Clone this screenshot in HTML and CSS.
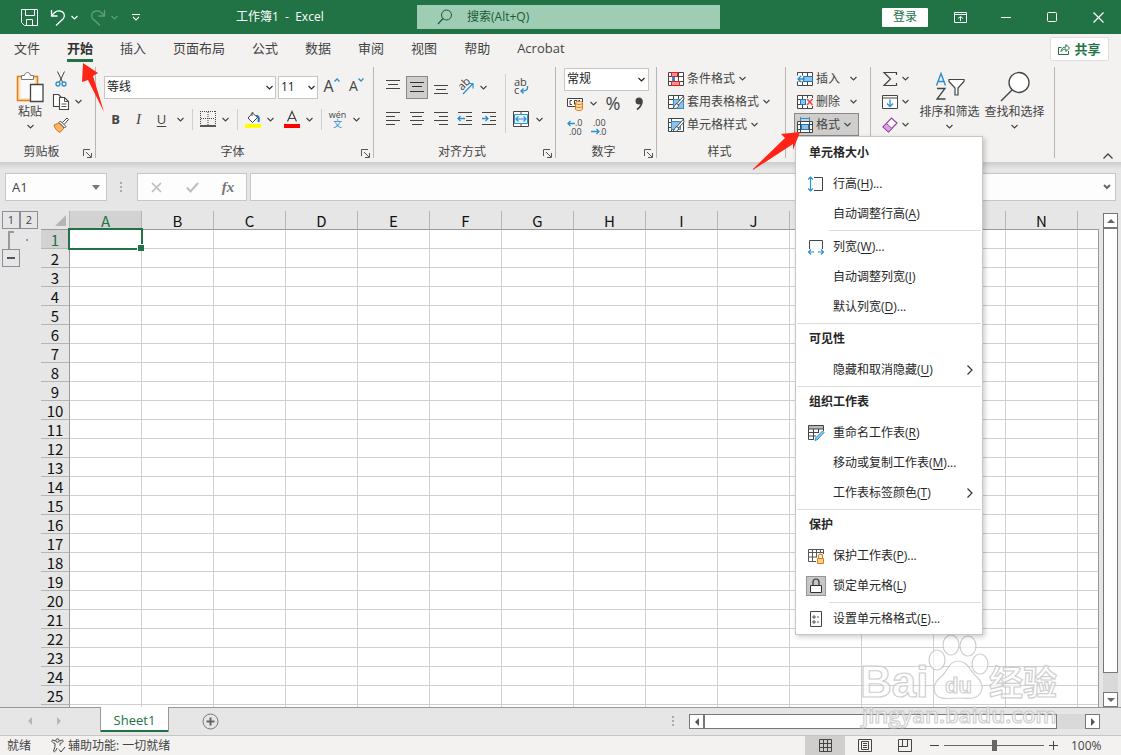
FILE: index.html
```html
<!DOCTYPE html>
<html lang="zh-CN">
<head>
    <meta charset="UTF-8">
    <meta name="viewport" content="width=device-width, initial-scale=1.0">
    <title>工作簿1 - Excel</title>
    <link rel="stylesheet" href="styles.css">
</head>
<body>
    <!-- 图标 -->
    <svg class="sprite" aria-hidden="true">
        <symbol id="chev" viewBox="0 0 7 5"><path d="M.5 1l3 3 3-3" fill="none" stroke="currentColor" stroke-width="1.1"/></symbol>
        <symbol id="launch" viewBox="0 0 9 9"><path d="M.5 7V.5H7M3 3l5 5M8.500 4v4.500H4" fill="none" stroke="#555"/></symbol>
        <symbol id="grid-base" viewBox="0 0 16 16"><path d="M.5 1.500h15v13H.5zM.5 5.500h15M.5 10.500h15M5.500 1.500v13M10.500 1.500v13" fill="#fff" stroke="#444"/></symbol>
    </svg>

    <header class="titlebar">
        <div class="quick">
            <button class="q-save" aria-label="保存"><svg width="17" height="17" viewBox="0 0 17 17"><path d="M.5.5h16v16h-13l-3-3zM4.500.5v6h9v-6M5.500 16.500v-6h6v6" fill="none" stroke="#fff"/></svg></button>
            <button class="q-undo" aria-label="撤消"><svg width="16" height="17" viewBox="0 0 16 17"><path d="M1.500 1v6h6M1.500 7C4 3.500 7 1.500 10 2c4 .5 5.500 4.500 3.500 7.500L6 16.500" fill="none" stroke="#fff" stroke-width="1.3"/></svg></button>
            <button class="q-drop" aria-label="撤消列表"><svg width="7" height="5"><use href="#chev"/></svg></button>
            <button class="q-undo dim" aria-label="恢复"><svg width="16" height="17" viewBox="0 0 16 17"><path d="M14.500 1v6h-6M14.500 7C12 3.500 9 1.500 6 2 2 2.500.5 6.500 2.500 9.500l7.500 7" fill="none" stroke="#fff" stroke-width="1.3"/></svg></button>
            <button class="q-drop dim" aria-label="恢复列表"><svg width="7" height="5"><use href="#chev"/></svg></button>
            <button class="q-more" aria-label="自定义快速访问工具栏"><svg width="8" height="7" viewBox="0 0 8 7"><path d="M0 .5h8M1 3l3 3 3-3" fill="none" stroke="#fff" stroke-width="1.1"/></svg></button>
        </div>
        <div class="doc-title">工作簿1&nbsp; -&nbsp; Excel</div>
        <label class="search">
            <svg width="16" height="16" viewBox="0 0 16 16"><circle cx="9.500" cy="6" r="5" fill="none" stroke="#185c37"/><path d="M6 9.500L1 15" stroke="#185c37" stroke-width="1.2"/></svg>
            <input type="text" aria-label="搜索" placeholder="搜索(Alt+Q)">
        </label>
        <div class="window-tools">
            <button class="login">登录</button>
            <button class="win" aria-label="功能区显示选项"><svg width="13" height="11" viewBox="0 0 13 11"><path d="M.5.5h12v10H.5zM.5 2.500h12M6.500 9V4.500M4 6.500l2.500-2 2.500 2" fill="none" stroke="#fff"/></svg></button>
            <button class="win" aria-label="最小化"><svg width="10" height="11" viewBox="0 0 10 11"><path d="M0 5.500h10" stroke="#fff"/></svg></button>
            <button class="win" aria-label="最大化"><svg width="11" height="11" viewBox="0 0 11 11"><rect x=".5" y=".5" width="9" height="9" rx="1" fill="none" stroke="#fff"/></svg></button>
            <button class="win" aria-label="关闭"><svg width="11" height="11" viewBox="0 0 11 11"><path d="M.5.5l10 10M10.500.5l-10 10" stroke="#fff" stroke-width="1.2"/></svg></button>
        </div>
    </header>

    <nav class="tabs">
        <a href="#">文件</a>
        <a href="#" class="active">开始
            <svg class="pointer pointer-tab" width="24" height="50" viewBox="0 0 24 50"><path d="M3 0l15 10-5 3 11 36L8 17l-6 2z" fill="#ff2416"/></svg>
        </a>
        <a href="#">插入</a>
        <a href="#">页面布局</a>
        <a href="#">公式</a>
        <a href="#">数据</a>
        <a href="#">审阅</a>
        <a href="#">视图</a>
        <a href="#">帮助</a>
        <a href="#">Acrobat</a>
        <button class="share"><svg width="12" height="12" viewBox="0 0 12 12"><path d="M3.500 4.500h-3v7h10V8M3 8.500c.5-3 2-4.500 5-4.500V1.500L11.500 5 8 8.500V6C6 6 4.500 6.500 3 8.500z" fill="none" stroke="#217346"/></svg>共享</button>
    </nav>

    <section class="ribbon">
        <div class="group clipboard">
            <div class="body">
                <button class="big">
                    <svg width="28" height="32" viewBox="0 0 28 32"><path d="M1.500 5.500h20v24h-20z" fill="#fbe3b5" stroke="#e07c17" stroke-width="1.500"/><path d="M4.500 8h14v19h-14z" fill="#fafafa"/><path d="M5.500 8.500v-4h3c.5-4 5.500-4 6 0h3v4z" fill="#fff" stroke="#777"/><path d="M14.500 13.500h12.500v17H14.500z" fill="#fff" stroke="#444" stroke-width="1.300"/></svg>
                    <span>粘贴</span>
                    <svg width="7" height="5"><use href="#chev"/></svg>
                </button>
                <div class="stack">
                    <button class="line" aria-label="剪切"><svg width="16" height="16" viewBox="0 0 16 16"><path d="M4.500.5l5 10.500M11.500.5l-5 10.500" stroke="#444" fill="none"/><circle cx="5" cy="13" r="2" fill="none" stroke="#2b8fd0" stroke-width="1.300"/><circle cx="11" cy="13" r="2" fill="none" stroke="#2b8fd0" stroke-width="1.300"/></svg></button>
                    <button class="line" aria-label="复制"><svg width="17" height="16" viewBox="0 0 17 16"><path d="M6 12.500H.5V.5h5l3 3M6.500 3.500h5l4 4v8h-9z" fill="#fff" stroke="#444" stroke-width="1.100"/><path d="M11.500 3.500v4h4M8.500 10h5M8.500 12.500h5" fill="none" stroke="#444" stroke-width=".9"/></svg><svg class="copy-arrow" width="7" height="5"><use href="#chev"/></svg></button>
                    <button class="line" aria-label="格式刷"><svg width="16" height="16" viewBox="0 0 16 16"><path d="M1 8l5-2 5 5-4 4.500C4 14 2 12 1 8z" fill="#f8b56a" stroke="#d9731a"/><path d="M6 5.500L7.500 4l5.500 5.500-1.500 1.500zM9.500 5.500L14 1l1.500 1.500L11.500 7" fill="#fff" stroke="#444"/></svg></button>
                </div>
            </div>
            <footer><span>剪贴板</span><button aria-label="剪贴板设置"><svg width="9" height="9"><use href="#launch"/></svg></button></footer>
        </div>

        <div class="group font">
            <div class="body two-rows">
                <div class="row">
                    <label class="combo font-name"><select aria-label="字体"><option>等线</option></select><svg width="7" height="5"><use href="#chev"/></svg></label>
                    <label class="combo font-size"><select aria-label="字号"><option>11</option></select><svg width="7" height="5"><use href="#chev"/></svg></label>
                    <button class="tool grow" aria-label="增大字号"><span>A</span><svg width="6" height="4" viewBox="0 0 6 4"><path d="M.5 3.500L3 1l2.500 2.500" fill="none" stroke="#2b8fd0" stroke-width="1.300"/></svg></button>
                    <button class="tool shrink" aria-label="减小字号"><span>A</span><svg width="6" height="4" viewBox="0 0 6 4"><path d="M.5.5L3 3 5.500.5" fill="none" stroke="#2b8fd0" stroke-width="1.300"/></svg></button>
                </div>
                <div class="row">
                    <button class="tool letter"><b>B</b></button>
                    <button class="tool letter"><i>I</i></button>
                    <button class="tool letter"><u>U</u></button>
                    <button class="arrow" aria-label="下划线样式"><svg width="7" height="5"><use href="#chev"/></svg></button>
                    <i class="split"></i>
                    <button class="tool icon" aria-label="边框"><svg width="16" height="16" viewBox="0 0 16 16"><path d="M.5 0v14M15.500 0v14M0 .5h16M8 1v13M1 7.500h14" fill="none" stroke="#444" stroke-dasharray="1 1"/><path d="M0 15h16" stroke="#222" stroke-width="1.500"/></svg></button>
                    <button class="arrow" aria-label="边框样式"><svg width="7" height="5"><use href="#chev"/></svg></button>
                    <i class="split"></i>
                    <button class="tool icon" aria-label="填充颜色"><svg width="16" height="17" viewBox="0 0 16 17"><path d="M8 1.500L3 7l4.500 4.500 5-5L7 1.500V5" fill="#fff" stroke="#444"/><path d="M11 5c3-.5 3 2.500 2.500 6" fill="none" stroke="#1f6fb4" stroke-width="2"/><path d="M0 13h16v4H0z" fill="#ff0"/></svg></button>
                    <button class="arrow" aria-label="填充颜色列表"><svg width="7" height="5"><use href="#chev"/></svg></button>
                    <button class="tool icon color" aria-label="字体颜色"><svg width="16" height="17" viewBox="0 0 16 17"><path d="M3.500 10.500L8 .5l4.500 10M5 7.500h6" fill="none" stroke="#444" stroke-width="1.200"/><path d="M0 13h16v4H0z" fill="#f00"/></svg></button>
                    <button class="arrow" aria-label="字体颜色列表"><svg width="7" height="5"><use href="#chev"/></svg></button>
                    <i class="split"></i>
                    <button class="tool pinyin"><span>wén</span><em>文</em></button>
                    <button class="arrow" aria-label="拼音设置"><svg width="7" height="5"><use href="#chev"/></svg></button>
                </div>
            </div>
            <footer><span>字体</span><button aria-label="字体设置"><svg width="9" height="9"><use href="#launch"/></svg></button></footer>
        </div>

        <div class="group align">
            <div class="body">
                <div class="two-rows">
                    <div class="row">
                        <button class="tool" aria-label="顶端对齐"><svg width="14" height="14" viewBox="0 0 14 14"><path d="M0 .5h14M2 4.500h10M0 8.500h14" stroke="#444"/></svg></button>
                        <button class="tool on" aria-label="垂直居中"><svg width="14" height="14" viewBox="0 0 14 14"><path d="M0 2.500h14M2 6.500h10M0 11.500h14" stroke="#333"/></svg></button>
                        <button class="tool" aria-label="底端对齐"><svg width="14" height="14" viewBox="0 0 14 14"><path d="M0 5.500h14M2 9.500h10M0 13.500h14" stroke="#444"/></svg></button>
                        <button class="tool" aria-label="方向"><svg width="17" height="16" viewBox="0 0 17 16"><text x="0" y="0" font-size="11" transform="translate(5 12) rotate(-45)" fill="#444">ab</text><path d="M6 15L15.500 5M11 4.500h5v5" fill="none" stroke="#2b8fd0" stroke-width="1.200"/></svg></button>
                        <button class="arrow" aria-label="方向列表"><svg width="7" height="5"><use href="#chev"/></svg></button>
                    </div>
                    <div class="row">
                        <button class="tool" aria-label="左对齐"><svg width="14" height="14" viewBox="0 0 14 14"><path d="M0 .5h14M0 4.500h9M0 8.500h14M0 12.500h9" stroke="#444"/></svg></button>
                        <button class="tool" aria-label="居中"><svg width="14" height="14" viewBox="0 0 14 14"><path d="M0 .5h14M2 4.500h10M0 8.500h14M2 12.500h10" stroke="#444"/></svg></button>
                        <button class="tool" aria-label="右对齐"><svg width="14" height="14" viewBox="0 0 14 14"><path d="M0 .5h14M5 4.500h9M0 8.500h14M5 12.500h9" stroke="#444"/></svg></button>
                        <button class="tool" aria-label="减少缩进量"><svg width="14" height="14" viewBox="0 0 14 14"><path d="M0 .5h14M8 4.500h6M8 8.500h6M0 12.500h14" stroke="#444"/><path d="M7 6.500H0M2.500 4L0 6.500 2.500 9" fill="none" stroke="#2b8fd0" stroke-width="1.300"/></svg></button>
                        <button class="tool" aria-label="增加缩进量"><svg width="14" height="14" viewBox="0 0 14 14"><path d="M0 .5h14M8 4.500h6M8 8.500h6M0 12.500h14" stroke="#444"/><path d="M0 6.500h6M3.500 4L6 6.500 3.500 9" fill="none" stroke="#2b8fd0" stroke-width="1.300"/></svg></button>
                    </div>
                </div>
                <i class="split tall"></i>
                <div class="two-rows">
                    <div class="row">
                        <button class="tool" aria-label="自动换行"><svg width="16" height="18" viewBox="0 0 16 18"><text x="1" y="8" font-size="11" fill="#444">ab</text><text x="1" y="16" font-size="11" fill="#444">c</text><path d="M14.500 8v2c0 2.500-2 3-6.500 3M10.500 10.500L8 13l2.500 2.500" fill="none" stroke="#2b8fd0" stroke-width="1.400"/></svg></button>
                    </div>
                    <div class="row">
                        <button class="tool" aria-label="合并后居中"><svg width="16" height="16" viewBox="0 0 16 16"><path d="M.5.5h15v15H.5zM8 .5v3M8 12.500v3" fill="#fff" stroke="#444"/><path d="M1.500 3.500h13v9h-13z" fill="#e8f3fb" stroke="#2b8fd0"/><path d="M3 8h10M5.500 5.500L3 8l2.500 2.500M10.500 5.500L13 8l-2.500 2.500" fill="none" stroke="#2b8fd0" stroke-width="1.200"/></svg></button>
                        <button class="arrow" aria-label="合并列表"><svg width="7" height="5"><use href="#chev"/></svg></button>
                    </div>
                </div>
            </div>
            <footer><span>对齐方式</span><button aria-label="对齐设置"><svg width="9" height="9"><use href="#launch"/></svg></button></footer>
        </div>

        <div class="group number">
            <div class="body">
                <div class="row">
                    <label class="combo num-format"><select aria-label="数字格式"><option>常规</option></select><svg width="7" height="5"><use href="#chev"/></svg></label>
                </div>
                <div class="row">
                    <button class="tool" aria-label="会计数字格式"><svg width="17" height="15" viewBox="0 0 17 15"><path d="M8 10.500H.5v-8h15V6" fill="#fff" stroke="#444"/><path d="M5 4.500H3v4h2M10 8V4.500H7.500v4M13 4.500h-1.500" fill="none" stroke="#444"/><path d="M8.500 7v6c0 2 7 2 7 0V7c0-2-7-2-7 0zM8.500 7c0 2 7 2 7 0M8.500 10c0 2 7 2 7 0" fill="#ffe0b5" stroke="#e07c17"/></svg></button>
                    <button class="arrow" aria-label="会计格式列表"><svg width="7" height="5"><use href="#chev"/></svg></button>
                    <button class="tool percent">%</button>
                    <button class="tool" aria-label="千位分隔样式"><svg width="9" height="13" viewBox="0 0 9 13"><circle cx="4" cy="4" r="3.500" fill="#444"/><path d="M6.500 3c1 4-1 7-4.500 9.500" fill="none" stroke="#444" stroke-width="1.800"/></svg></button>
                </div>
                <div class="row">
                    <button class="tool" aria-label="增加小数位数"><svg width="17" height="17" viewBox="0 0 17 17"><text x="8" y="7" font-size="9" fill="#444">.0</text><text x="2" y="16" font-size="9" fill="#444">.00</text><path d="M8 4.500H1M3.500 2L1 4.500 3.500 7" fill="none" stroke="#2b8fd0" stroke-width="1.300"/></svg></button>
                    <button class="tool" aria-label="减少小数位数"><svg width="17" height="17" viewBox="0 0 17 17"><text x="2" y="7" font-size="9" fill="#444">.00</text><text x="8" y="16" font-size="9" fill="#444">.0</text><path d="M0 12.500h8M5.500 10L8 12.500 5.500 15" fill="none" stroke="#2b8fd0" stroke-width="1.300"/></svg></button>
                </div>
            </div>
            <footer><span>数字</span><button aria-label="数字设置"><svg width="9" height="9"><use href="#launch"/></svg></button></footer>
        </div>

        <div class="group styles">
            <div class="body stack">
                <button class="line"><svg width="16" height="16" viewBox="0 0 16 16"><use href="#grid-base"/><path d="M3.500 1.500h6v4h-6zM3.500 10.500h8v4h-8z" fill="#ff8f8f" stroke="#e02020"/><path d="M4 6h3v4H4z" fill="#2b8fd0"/></svg>条件格式<svg class="a" width="7" height="5"><use href="#chev"/></svg></button>
                <button class="line"><svg width="16" height="16" viewBox="0 0 16 16"><use href="#grid-base"/><path d="M5.500 5.500h10v9h-10z" fill="#8cc3ec" stroke="#2b8fd0"/><path d="M15.500 2L9 9.500l1.500 1.500L16 5zM9 9.500c-2 0-2 3-4 4.500 3 1 5.500 0 5.500-3z" fill="#fff" stroke="#444" stroke-width=".9"/></svg>套用表格格式<svg class="a" width="7" height="5"><use href="#chev"/></svg></button>
                <button class="line"><svg width="16" height="16" viewBox="0 0 16 16"><path d="M.5 1.500h15v13H.5zM.5 5.500h3M.5 10.500h3M3.500 1.500v13" fill="#fff" stroke="#444"/><path d="M3.500 4.500h9v8h-9z" fill="#8cc3ec" stroke="#2b8fd0"/><path d="M15.500 2L9 9.500l1.500 1.500L16 5zM9 9.500c-2 0-2 3-4 4.500 3 1 5.500 0 5.500-3z" fill="#fff" stroke="#444" stroke-width=".9"/></svg>单元格样式<svg class="a" width="7" height="5"><use href="#chev"/></svg></button>
            </div>
            <footer><span>样式</span></footer>
        </div>

        <div class="group cells">
            <div class="body stack">
                <button class="line"><svg width="16" height="16" viewBox="0 0 16 16"><use href="#grid-base"/><path d="M0 4.500h7v6H0z" fill="#f3f2f1"/><path d="M6.500 5.500h9v5h-9z" fill="#8cc3ec" stroke="#1f77c0"/><path d="M8 8H1M4 5L1 8l3 3" fill="none" stroke="#2b8fd0" stroke-width="1.300"/></svg>插入<svg class="a wide" width="7" height="5"><use href="#chev"/></svg></button>
                <button class="line"><svg width="16" height="16" viewBox="0 0 16 16"><use href="#grid-base"/><path d="M9 4h7v8H9z" fill="#f3f2f1"/><path d="M3.500 5.500h5v5h-5z" fill="#8cc3ec" stroke="#1f77c0"/><path d="M10 5l5.500 6M15.500 5L10 11" stroke="#e8473f" stroke-width="1.500"/></svg>删除<svg class="a wide" width="7" height="5"><use href="#chev"/></svg></button>
                <div class="format">
                    <button class="line on"><svg width="16" height="16" viewBox="0 0 16 16"><path d="M.5 4.500h15v11H.5zM.5 7.500h15M.5 12.500h15M3.500 4.500v11M12.500 4.500v11" fill="#fff" stroke="#444"/><path d="M4.500 7.500h7v5h-7z" fill="#8cc3ec" stroke="#1f77c0"/><path d="M3.500 0v4M12.500 0v4M3.500 1.500h9" stroke="#2b8fd0"/></svg>格式<svg class="a" width="7" height="5"><use href="#chev"/></svg></button>
                    <div class="menu">
                        <h3>单元格大小</h3>
                        <button><svg width="16" height="16" viewBox="0 0 16 16"><path d="M6 1.500h8.500v13H6" fill="#fafafa" stroke="#444"/><path d="M2.500 1v14M0 3.500L2.500 1 5 3.500M0 12.500L2.500 15 5 12.500" fill="none" stroke="#2b8fd0" stroke-width="1.200"/></svg><span>行高(<u>H</u>)...</span></button>
                        <button><span>自动调整行高(<u>A</u>)</span></button>
                        <hr class="inset">
                        <button><svg width="16" height="16" viewBox="0 0 16 16"><path d="M1.500 10V1.500h13V10" fill="#fafafa" stroke="#444"/><path d="M0 13h6M10 13h6M3 10.500L.5 13 3 15.500M13 10.500l2.500 2.500-2.500 2.500" fill="none" stroke="#2b8fd0" stroke-width="1.200"/></svg><span>列宽(<u>W</u>)...</span></button>
                        <button><span>自动调整列宽(<u>I</u>)</span></button>
                        <button><span>默认列宽(<u>D</u>)...</span></button>
                        <hr>
                        <h3>可见性</h3>
                        <button><span>隐藏和取消隐藏(<u>U</u>)</span><svg class="sub" width="6" height="10" viewBox="0 0 6 10"><path d="M.5.5L5 5 .5 9.500" fill="none" stroke="#333" stroke-width="1.200"/></svg></button>
                        <hr>
                        <h3>组织工作表</h3>
                        <button><svg width="16" height="16" viewBox="0 0 16 16"><path d="M6 14.500H.5V.5h15V6M.5 7.500h10M.5 11H8M5.500 4v10.500M10.500 4v4" fill="none" stroke="#444"/><path d="M1 1h14v3H1z" fill="#bbb"/><path d="M.5 4h15" stroke="#444"/><path d="M14.500 6l1.500 1.500-6.500 7-2.500 1 1-3z" fill="#8cc3ec" stroke="#2b8fd0"/></svg><span>重命名工作表(<u>R</u>)</span></button>
                        <button><span>移动或复制工作表(<u>M</u>)...</span></button>
                        <button><span>工作表标签颜色(<u>T</u>)</span><svg class="sub" width="6" height="10" viewBox="0 0 6 10"><path d="M.5.5L5 5 .5 9.500" fill="none" stroke="#333" stroke-width="1.200"/></svg></button>
                        <hr>
                        <h3>保护</h3>
                        <button><svg width="16" height="16" viewBox="0 0 16 16"><path d="M8 13.500H.5v-12h15V6M.5 4.500h15M.5 9H9M4.500 1.500v12M8.500 1.500V9M12.500 1.500V5" fill="none" stroke="#555"/><path d="M10.500 10V8c0-2.500 4-2.500 4 0v2" fill="none" stroke="#e07c17" stroke-width="1.200"/><path d="M9.500 10.500h6v5h-6z" fill="#ffd28a" stroke="#e07c17"/></svg><span>保护工作表(<u>P</u>)...</span></button>
                        <button><svg class="pressed" width="20" height="20" viewBox="0 0 20 20"><path d="M7 9V6c0-4 6-4 6 0v3" fill="none" stroke="#333" stroke-width="1.200"/><path d="M4.500 9.500h11v7h-11z" fill="#fff" stroke="#333"/></svg><span>锁定单元格(<u>L</u>)</span></button>
                        <hr class="inset">
                        <button><svg width="12" height="16" viewBox="0 0 12 16"><path d="M.5.5h11v15H.5z" fill="#fff" stroke="#444"/><path d="M3 5h2v2H3zM3 10h2v2H3z" fill="none" stroke="#555"/><path d="M7 6h2M7 11h2" stroke="#555"/></svg><span>设置单元格格式(<u>E</u>)...</span></button>
                    </div>
                    <svg class="pointer pointer-format" width="49" height="40" viewBox="0 0 49 40"><path d="M47 1L28 3l4 4L0 38v1l40-26v6z" fill="#ff2416"/></svg>
                </div>
            </div>
        </div>

        <div class="group editing">
            <div class="body">
                <div class="stack">
                    <button class="line" aria-label="自动求和"><svg width="16" height="16" viewBox="0 0 16 16"><path d="M14.500 4V1.500H2L8.500 8 2 14.500h12.500V12" fill="none" stroke="#444" stroke-width="1.200"/></svg><svg class="a" width="7" height="5"><use href="#chev"/></svg></button>
                    <button class="line" aria-label="填充"><svg width="16" height="16" viewBox="0 0 16 16"><path d="M.5 1.500h15v13H.5zM.5 4h15" fill="#fff" stroke="#444"/><path d="M8 5.500V12M5 9.500L8 12.500l3-3" fill="none" stroke="#2b8fd0" stroke-width="1.300"/></svg><svg class="a" width="7" height="5"><use href="#chev"/></svg></button>
                    <button class="line" aria-label="清除"><svg width="16" height="16" viewBox="0 0 16 16"><path d="M1 10l8.500-9L15 6l-8.500 9z" fill="#fff" stroke="#9b3fa5" stroke-width="1.200"/><path d="M1 10l3.500-3.500L10 11.500 6.500 15z" fill="#d9a3df" stroke="#9b3fa5"/></svg><svg class="a" width="7" height="5"><use href="#chev"/></svg></button>
                </div>
                <button class="big">
                    <svg width="30" height="32" viewBox="0 0 30 32"><path d="M1.500 14.500l4.500-12 4.500 12M3 10.500h6" fill="none" stroke="#2b8fd0" stroke-width="1.400"/><path d="M2 17.500h8L2 28h8.500" fill="none" stroke="#444" stroke-width="1.300"/><path d="M14 8.500h15v2l-6 6.500v7h-3v-7l-6-6.500z" fill="#fff" stroke="#444" stroke-width="1.200"/></svg>
                    <span>排序和筛选</span>
                    <svg width="7" height="5"><use href="#chev"/></svg>
                </button>
                <button class="big">
                    <svg width="30" height="32" viewBox="0 0 30 32"><circle cx="19" cy="11.500" r="10" fill="#fff" stroke="#444" stroke-width="1.300"/><path d="M12 19L1 30" stroke="#444" stroke-width="1.400"/></svg>
                    <span>查找和选择</span>
                    <svg width="7" height="5"><use href="#chev"/></svg>
                </button>
            </div>
        </div>
        <button class="collapse" aria-label="折叠功能区"><svg width="10" height="6" viewBox="0 0 10 6"><path d="M.5 5.500L5 1l4.500 4.500" fill="none" stroke="#444" stroke-width="1.300"/></svg></button>
    </section>

    <section class="formula-bar">
        <label class="name-box"><input type="text" value="A1" aria-label="名称框"><svg width="8" height="5" viewBox="0 0 8 5"><path d="M0 0h8L4 5z" fill="#777"/></svg></label>
        <i class="dots"></i>
        <div class="fx">
            <button aria-label="取消"><svg width="11" height="11" viewBox="0 0 11 11"><path d="M1 1l9 9M10 1l-9 9" stroke="#bdbdbd" stroke-width="1.700"/></svg></button>
            <button aria-label="输入"><svg width="13" height="11" viewBox="0 0 13 11"><path d="M1 5.500L4.500 9.500 12 1" fill="none" stroke="#bdbdbd" stroke-width="2"/></svg></button>
            <button class="fn"><i>fx</i></button>
        </div>
        <label class="formula"><input type="text" aria-label="编辑栏"><svg width="8" height="6" viewBox="0 0 8 6"><path d="M1 1l3 3 3-3" fill="none" stroke="#666" stroke-width="2"/></svg></label>
    </section>

    <main class="workspace">
        <aside class="outline">
            <div class="levels"><button>1</button><button>2</button></div>
            <div class="bracket"><i></i><b></b></div>
            <button class="fold" aria-label="折叠"></button>
        </aside>
        <div class="sheet"><table id="grid"></table></div>
        <div class="vscroll">
            <button aria-label="向上滚动"><svg width="8" height="4" viewBox="0 0 8 4"><path d="M0 4h8L4 0z" fill="#666"/></svg></button>
            <div class="thumb"></div>
            <button aria-label="向下滚动"><svg width="8" height="4" viewBox="0 0 8 4"><path d="M0 0h8L4 4z" fill="#666"/></svg></button>
        </div>
    </main>

    <section class="sheet-tabs">
        <div class="nav">
            <button aria-label="上一张"><svg width="4" height="8" viewBox="0 0 4 8"><path d="M4 0v8L0 4z" fill="#b5b5b5"/></svg></button>
            <button aria-label="下一张"><svg width="4" height="8" viewBox="0 0 4 8"><path d="M0 0v8l4-4z" fill="#b5b5b5"/></svg></button>
        </div>
        <button class="sheet-tab">Sheet1</button>
        <button class="add" aria-label="新工作表"><svg width="17" height="17" viewBox="0 0 17 17"><circle cx="8.500" cy="8.500" r="7.500" fill="none" stroke="#777"/><path d="M8.500 4.500v8M4.500 8.500h8" stroke="#666" stroke-width="2"/></svg></button>
        <i class="dots"></i>
        <div class="hscroll">
            <button aria-label="向左滚动"><svg width="4" height="8" viewBox="0 0 4 8"><path d="M4 0v8L0 4z" fill="#555"/></svg></button>
            <div class="thumb"></div>
            <button aria-label="向右滚动"><svg width="4" height="8" viewBox="0 0 4 8"><path d="M0 0v8l4-4z" fill="#555"/></svg></button>
        </div>
    </section>

    <footer class="status">
        <span>就绪</span>
        <span class="access"><svg width="15" height="15" viewBox="0 0 15 15"><circle cx="6.500" cy="2.500" r="1.700" fill="none" stroke="#444"/><path d="M4.500 3L1.500 2C0 3 1 4.500 4 5.500v3L2.500 13c.5 1.500 2 1 3.500-3M8.500 3l3-1c1.500 1 .5 2.500-2.500 3.500v2M8 11.500l2 2.500 4-5" fill="none" stroke="#444"/></svg>辅助功能: 一切就绪</span>
        <div class="views">
            <button class="on" aria-label="普通"><svg width="13" height="13" viewBox="0 0 13 13"><path d="M.5.5h12v12H.5zM.5 4.500h12M.5 8.500h12M4.500.5v12M8.500.5v12" fill="none" stroke="#444"/></svg></button>
            <button aria-label="页面布局"><svg width="14" height="13" viewBox="0 0 14 13"><path d="M.5.5h13v12H.5zM3.500 2.500h7v8h-7zM5 4.500h4M5 6.500h4M5 8.500h4" fill="none" stroke="#444"/></svg></button>
            <button aria-label="分页预览"><svg width="14" height="13" viewBox="0 0 14 13"><path d="M.5.5h13v12H.5zM4.500.5v7M9.500.5v7M.5 7.500h9" fill="none" stroke="#444"/></svg></button>
        </div>
        <div class="zoom">
            <button aria-label="缩小"><svg width="9" height="9" viewBox="0 0 9 9"><path d="M0 4.500h9" stroke="#444"/></svg></button>
            <input type="range" min="0" max="100" value="50" aria-label="显示比例">
            <button aria-label="放大"><svg width="9" height="9" viewBox="0 0 9 9"><path d="M0 4.500h9M4.500 0v9" stroke="#444"/></svg></button>
            <span>100%</span>
        </div>
    </footer>

    <svg class="watermark" width="204" height="104" viewBox="0 0 204 104" aria-hidden="true">
        <g fill="#fff" fill-opacity=".8" stroke="#c4c4c4" stroke-width="1.200">
            <text class="wm-latin" x="2" y="66" font-size="44">Bai</text>
            <ellipse cx="79" cy="29" rx="8" ry="10"/>
            <ellipse cx="93" cy="14" rx="8" ry="10"/>
            <ellipse cx="110" cy="15" rx="8" ry="10"/>
            <ellipse cx="122" cy="33" rx="8" ry="10"/>
            <path d="M100 30c9 0 11 8 17 14 6 5 9 10 6 17-5 9-15 6-23 6s-19 3-23-5c-3-8 2-13 8-18 5-6 7-14 15-14z"/>
            <text class="wm-latin" x="87" y="62" font-size="22">du</text>
            <text class="wm-cjk" x="131" y="64" font-size="34">经验</text>
            <text class="wm-url" x="4" y="92" font-size="22">jingyan.baidu.com</text>
        </g>
    </svg>

    <script>
        const COLS = 15;
        const ROWS = 26;
        const selected = { row: 1, col: 0 };

        // 生成单元格
        function renderGrid() {
            const grid = document.getElementById('grid');
            let html = '<thead><tr><th class="corner"></th>';

            for (let c = 0; c < COLS; c++) {
                const cls = c === selected.col ? ' class="current"' : '';
                html += `<th${cls}>${String.fromCharCode(65 + c)}</th>`;
            }
            html += '</tr></thead><tbody>';

            for (let r = 1; r <= ROWS; r++) {
                html += `<tr><th${r === selected.row ? ' class="current"' : ''}>${r}</th>`;
                for (let c = 0; c < COLS; c++) {
                    const isCurrent = r === selected.row && c === selected.col;
                    html += isCurrent ? '<td class="selected"></td>' : '<td></td>';
                }
                html += '</tr>';
            }
            grid.innerHTML = html + '</tbody>';
        }

        renderGrid();
    </script>
</body>
</html>
```
FILE: styles.css
```css
:root {
    --green: #217346;
    --ribbon: #f3f2f1;
    --gray: #e6e6e6;
    --line: #c6c6c6;
    --text: #444;
}

* {
    box-sizing: border-box;
}

body {
    margin: 0;
    height: 100vh;
    display: flex;
    flex-direction: column;
    overflow: hidden;
    position: relative;
    background: var(--gray);
    color: var(--text);
    font-family: "Open Sans", "Noto Sans CJK SC", sans-serif;
    font-size: 12px;
    line-height: 16px;
}

button, input, select {
    font: inherit;
    color: inherit;
    border: none;
    background: none;
    padding: 0;
    margin: 0;
    border-radius: 0;
    outline: none;
}

button {
    display: flex;
    align-items: center;
    justify-content: center;
    white-space: nowrap;
}

svg {
    display: block;
    flex: none;
    overflow: visible;
}

.sprite {
    position: absolute;
    width: 0;
    height: 0;
}

/* 标题栏 */
.titlebar {
    flex: none;
    height: 34px;
    display: flex;
    align-items: center;
    background: var(--green);
    color: #fff;
}

.quick {
    display: flex;
    align-items: center;
    width: 236px;
    padding-left: 20px;
}

.q-save {
    width: 18px;
    margin-right: 12px;
}

.q-undo {
    width: 16px;
}

.q-drop {
    width: 16px;
    margin-right: 8px;
}

.q-more {
    width: 20px;
    margin-left: -4px;
}

.dim {
    opacity: 0.3;
}

.doc-title {
    width: 181px;
    white-space: nowrap;
}

.search {
    width: 27%;
    height: 24px;
    display: flex;
    align-items: center;
    gap: 14px;
    padding-left: 20px;
    background: #9fcdb3;
}

.search input {
    flex: 1;
    min-width: 0;
}

.search input::placeholder {
    color: #185c37;
    opacity: 1;
}

.window-tools {
    display: flex;
    align-items: center;
    margin-left: auto;
}

.login {
    width: 46px;
    height: 19px;
    margin-right: 9px;
    background: #fff;
    color: var(--green);
    border-radius: 1px;
}

.win {
    width: 46px;
    height: 34px;
}

/* 选项卡 */
.tabs {
    flex: none;
    height: 33px;
    display: flex;
    align-items: flex-start;
    gap: 27px;
    padding: 3px 12px 0 14px;
    background: var(--ribbon);
    font-size: 13px;
}

.tabs a {
    position: relative;
    height: 25px;
    line-height: 22px;
    color: var(--text);
    text-decoration: none;
    white-space: nowrap;
}

.tabs a.active {
    font-weight: bold;
    color: #333;
    border-bottom: 3px solid var(--green);
}

.share {
    width: 59px;
    height: 24px;
    margin-left: auto;
    gap: 4px;
    background: #fff;
    border: 1px solid #e1dfdd;
    border-radius: 2px;
    color: var(--green);
    font-weight: bold;
}

.pointer {
    position: absolute;
    z-index: 20;
}

.pointer-tab {
    left: 13px;
    top: 26px;
}

.pointer-format {
    right: 68px;
    top: 18px;
}

/* 功能区 */
.ribbon {
    flex: none;
    height: 96px;
    display: flex;
    align-items: flex-start;
    background: var(--ribbon);
    border-bottom: 1px solid #d2d0ce;
}

.group {
    flex: none;
    height: 91px;
    display: flex;
    flex-direction: column;
    justify-content: space-between;
    border-right: 1px solid #b8b6b4;
}

.group .body {
    display: flex;
}

.group footer {
    display: flex;
    align-items: flex-start;
    height: 14px;
    padding-right: 3px;
}

.group footer span {
    flex: 1;
    text-align: center;
}

.group footer button {
    align-self: flex-end;
}

.row {
    display: flex;
    align-items: center;
    height: 24px;
}

.two-rows {
    display: flex;
    flex-direction: column;
    gap: 8px;
    padding-top: 8px;
}

.group .stack {
    display: flex;
    flex-direction: column;
}

.line {
    height: 23px;
    justify-content: flex-start;
    gap: 3px;
}

.line .a {
    margin-left: 1px;
}

.line .a.wide {
    margin-left: 7px;
}

.tool {
    width: 24px;
    height: 23px;
}

.tool.on {
    width: 22px;
    margin: 0 1px;
    background: #d0cecc;
    border: 1px solid #8a8886;
}

.arrow {
    width: 12px;
    height: 23px;
}

.split {
    flex: none;
    width: 1px;
    height: 21px;
    margin: 0 4px;
    background: #d0cecc;
}

.split.tall {
    height: 59px;
    margin-top: 7px;
}

.big {
    flex-direction: column;
    justify-content: flex-start;
    padding-top: 4px;
    height: 68px;
}

.big span {
    margin: 1px 0 4px;
}

.combo {
    position: relative;
    display: flex;
    align-items: center;
    height: 23px;
    background: #fff;
    border: 1px solid #c8c6c4;
    color: #222;
}

.combo select {
    appearance: none;
    flex: 1;
    min-width: 0;
    padding-left: 2px;
}

.combo svg {
    margin-right: 2px;
}

.clipboard {
    width: 96px;
}

.clipboard .big {
    width: 36px;
    margin: 0 2px 0 12px;
}

.clipboard .stack {
    padding-left: 3px;
}

.copy-arrow {
    margin-left: 2px;
}

.font {
    width: 278px;
    padding-left: 8px;
}

.font .body {
    flex-direction: column;
}

.font .tool {
    width: 23px;
}

.font .icon {
    width: 21px;
}

.font .color {
    margin-left: 3px;
}

.font .arrow {
    width: 15px;
}

.font-name {
    width: 172px;
    margin-right: 2px;
}

.font-size {
    width: 40px;
    margin-right: 2px;
}

.font .grow,
.font .shrink {
    align-items: flex-start;
    padding-top: 2px;
    font-size: 16px;
}

.font .shrink {
    font-size: 14px;
    margin-left: 2px;
}

.letter {
    font-size: 13px;
}

.letter i {
    font-family: "Liberation Serif", serif;
    font-size: 15px;
}

.font .pinyin {
    flex-direction: column;
    font-size: 9px;
    line-height: 9px;
}

.pinyin em {
    font-style: normal;
    color: #2b8fd0;
    line-height: 10px;
}

.align {
    width: 182px;
    padding-left: 7px;
}

.align .split {
    margin-left: 4px;
    margin-right: 3px;
}

.number {
    width: 101px;
    padding-left: 7px;
}

.number .body {
    flex-direction: column;
}

.num-format {
    width: 85px;
    margin-left: 1px;
}

.num-format svg {
    margin-right: 3px;
}

.percent {
    font-size: 18px;
    margin: 0 2px;
}

.styles {
    width: 129px;
}

.styles .line {
    padding-left: 11px;
}

.cells {
    width: 85px;
    padding-left: 8px;
}

.cells .line {
    width: 65px;
    padding-left: 3px;
}

.cells .line.on {
    padding-left: 2px;
    background: #d0cecc;
    border: 1px solid #8a8886;
}

.format {
    position: relative;
}

.editing {
    width: 184px;
    padding-left: 11px;
}

.editing .big {
    width: 65px;
}

.editing .stack {
    width: 35px;
}

.collapse {
    margin: auto 8px 3px auto;
}

/* 格式菜单 */
.menu {
    position: absolute;
    z-index: 10;
    left: 1px;
    top: 100%;
    width: 188px;
    padding: 2px 0 0;
    background: #fff;
    border: 1px solid var(--line);
    box-shadow: 2px 2px 5px rgba(0, 0, 0, 0.2);
    color: #262626;
}

.menu h3 {
    margin: 0;
    padding-left: 13px;
    height: 30px;
    font-size: 12px;
    line-height: 28px;
}

.menu button {
    position: relative;
    width: 100%;
    height: 30px;
    display: grid;
    grid-template-columns: 20px 1fr auto;
    column-gap: 7px;
    justify-items: center;
    padding: 0 9px 0 10px;
}

.menu button span {
    grid-column: 2;
    justify-self: start;
}

.menu u,
.letter u {
    text-underline-offset: 2px;
}

.menu .pressed {
    background: #c8c6c4;
    outline: 1px solid #979593;
    outline-offset: -1px;
}

.menu hr {
    height: 1px;
    margin: 1px;
    border: none;
    background: #dcdcdc;
}

.menu hr.inset {
    margin-left: 33px;
}

/* 编辑栏 */
.formula-bar {
    flex: none;
    display: flex;
    height: 48px;
    padding: 10px 5px;
    background: linear-gradient(#d0d0d0, var(--gray) 6px);
}

.formula-bar label,
.fx {
    display: flex;
    align-items: center;
    height: 28px;
    background: #fdfdfd;
    border: 1px solid var(--line);
}

.name-box {
    width: 102px;
    padding: 0 6px;
    font-size: 13px;
}

.name-box input,
.formula input {
    flex: 1;
    min-width: 0;
}

.dots {
    width: 2px;
    height: 10px;
    background: repeating-linear-gradient(#aaa 0 2px, transparent 2px 4px);
}

.formula-bar .dots {
    margin: 9px 15px 0 13px;
}

.fx {
    width: 110px;
    margin-right: 3px;
}

.fx button {
    flex: 1;
}

.fn {
    font-family: "Liberation Serif", serif;
    font-size: 15px;
    font-weight: bold;
    color: #777;
}

.formula {
    flex: 1;
    padding: 0 4px;
}

/* 表格 */
.workspace {
    flex: 1;
    min-height: 0;
    display: flex;
}

.outline {
    flex: none;
    width: 41px;
    padding-left: 2px;
}

.levels {
    display: flex;
}

.levels button,
.fold {
    width: 18px;
    height: 18px;
    border: 1px solid #8a8f99;
    font-size: 11px;
}

.bracket {
    display: flex;
    align-items: center;
    gap: 12px;
    height: 20px;
    padding: 2px 0 0 6px;
}

.bracket i {
    width: 6px;
    height: 18px;
    border: solid #999;
    border-width: 2px 0 0 2px;
}

.bracket b {
    width: 2px;
    height: 2px;
    background: #999;
}

.fold::before {
    content: "";
    width: 8px;
    height: 2px;
    background: #555;
}

.sheet {
    flex: 1;
    min-width: 0;
    position: relative;
    overflow: hidden;
}

.sheet::after {
    content: "";
    position: absolute;
    top: 18px;
    right: 0;
    bottom: 0;
    width: 1px;
    background: #999;
}

#grid {
    border-collapse: separate;
    border-spacing: 0;
    font-family: "Noto Sans CJK SC", sans-serif;
    font-size: 15px;
    color: #111;
}

#grid th,
#grid td {
    width: 72px;
    min-width: 72px;
    height: 19px;
    padding: 0;
    font-weight: normal;
    border: solid #d0d0d0;
    border-width: 0 1px 1px 0;
    background: #fff;
    position: relative;
}

#grid th {
    padding-top: 2px;
    line-height: 16px;
    background: var(--gray);
    border-color: #b5b5b5;
}

#grid thead th {
    border-bottom-color: #999;
}

#grid tbody th,
#grid .corner {
    width: 29px;
    min-width: 29px;
    border-right-color: #999;
}

#grid th.current {
    background: #d2d2d2;
    color: var(--green);
}

#grid .corner {
    border-right-color: #b5b5b5;
}

.corner::after {
    content: "";
    position: absolute;
    right: 3px;
    bottom: 3px;
    border-left: 11px solid transparent;
    border-bottom: 11px solid #b5b5b5;
}

#grid .selected {
    z-index: 2;
}

.selected::before {
    content: "";
    position: absolute;
    inset: -2px -2px -2px -2px;
    border: 2px solid var(--green);
}

.selected::after {
    content: "";
    position: absolute;
    right: -3px;
    bottom: -3px;
    width: 6px;
    height: 6px;
    background: var(--green);
    border: solid #fff;
    border-width: 1px 0 0 1px;
}

/* 滚动条 */
.vscroll,
.hscroll {
    flex: none;
    display: flex;
    background: #d9d9d9;
}

.vscroll {
    flex-direction: column;
    width: 15px;
    margin: 2px 3px 0 4px;
}

.vscroll button,
.hscroll button {
    flex: none;
    width: 15px;
    height: 15px;
    background: #fff;
    border: 1px solid #777;
}

.thumb {
    flex: 1;
    background: #fff;
    border: 1px solid #777;
}

.vscroll .thumb {
    margin-bottom: 19px;
}

.hscroll .thumb {
    margin-right: 28px;
}

/* 工作表标签 */
.sheet-tabs {
    flex: none;
    display: flex;
    height: 29px;
    border-top: 1px solid #999;
    border-bottom: 1px solid var(--line);
}

.nav {
    display: flex;
    width: 100px;
    padding-left: 15px;
}

.nav button {
    width: 29px;
    height: 26px;
}

.sheet-tab {
    width: 69px;
    height: 25px;
    margin-top: -1px;
    background: #fff;
    border: solid #999;
    border-width: 0 1px;
    box-shadow: inset 0 -2px var(--green);
    color: var(--green);
    font-size: 13px;
}

.add {
    width: 17px;
    height: 26px;
    margin-left: 33px;
}

.sheet-tabs .dots {
    margin: 8px 15px 0 auto;
}

.hscroll {
    width: 411px;
    height: 15px;
    margin: 6px 21px 0 0;
}

/* 状态栏 */
.status {
    flex: none;
    display: flex;
    align-items: center;
    height: 19px;
    padding: 0 18px 0 7px;
    background: var(--ribbon);
}

.access {
    display: flex;
    align-items: center;
    gap: 2px;
    margin-left: 20px;
}

.views {
    display: flex;
    margin-left: auto;
}

.views button {
    width: 40px;
    height: 19px;
}

.views .on {
    background: #d0cecc;
}

.zoom {
    display: flex;
    align-items: center;
    gap: 5px;
    padding-left: 5px;
}

.zoom input {
    appearance: none;
    width: 100px;
    height: 11px;
    background: linear-gradient(#666, #666) center / 100% 1px no-repeat;
}

.zoom input::-webkit-slider-thumb {
    appearance: none;
    width: 5px;
    height: 11px;
    background: #666;
}

.zoom span {
    width: 32px;
    margin-left: 8px;
}

/* 水印 */
.watermark {
    position: absolute;
    z-index: 5;
    right: 59px;
    bottom: 20px;
    opacity: 0.8;
    pointer-events: none;
}

.wm-latin {
    font-family: "Liberation Sans", sans-serif;
    font-weight: bold;
}

.wm-cjk {
    font-family: "Noto Sans CJK SC", sans-serif;
    font-weight: bold;
}

.wm-url {
    font-family: "Open Sans", sans-serif;
    font-weight: 600;
}
```
